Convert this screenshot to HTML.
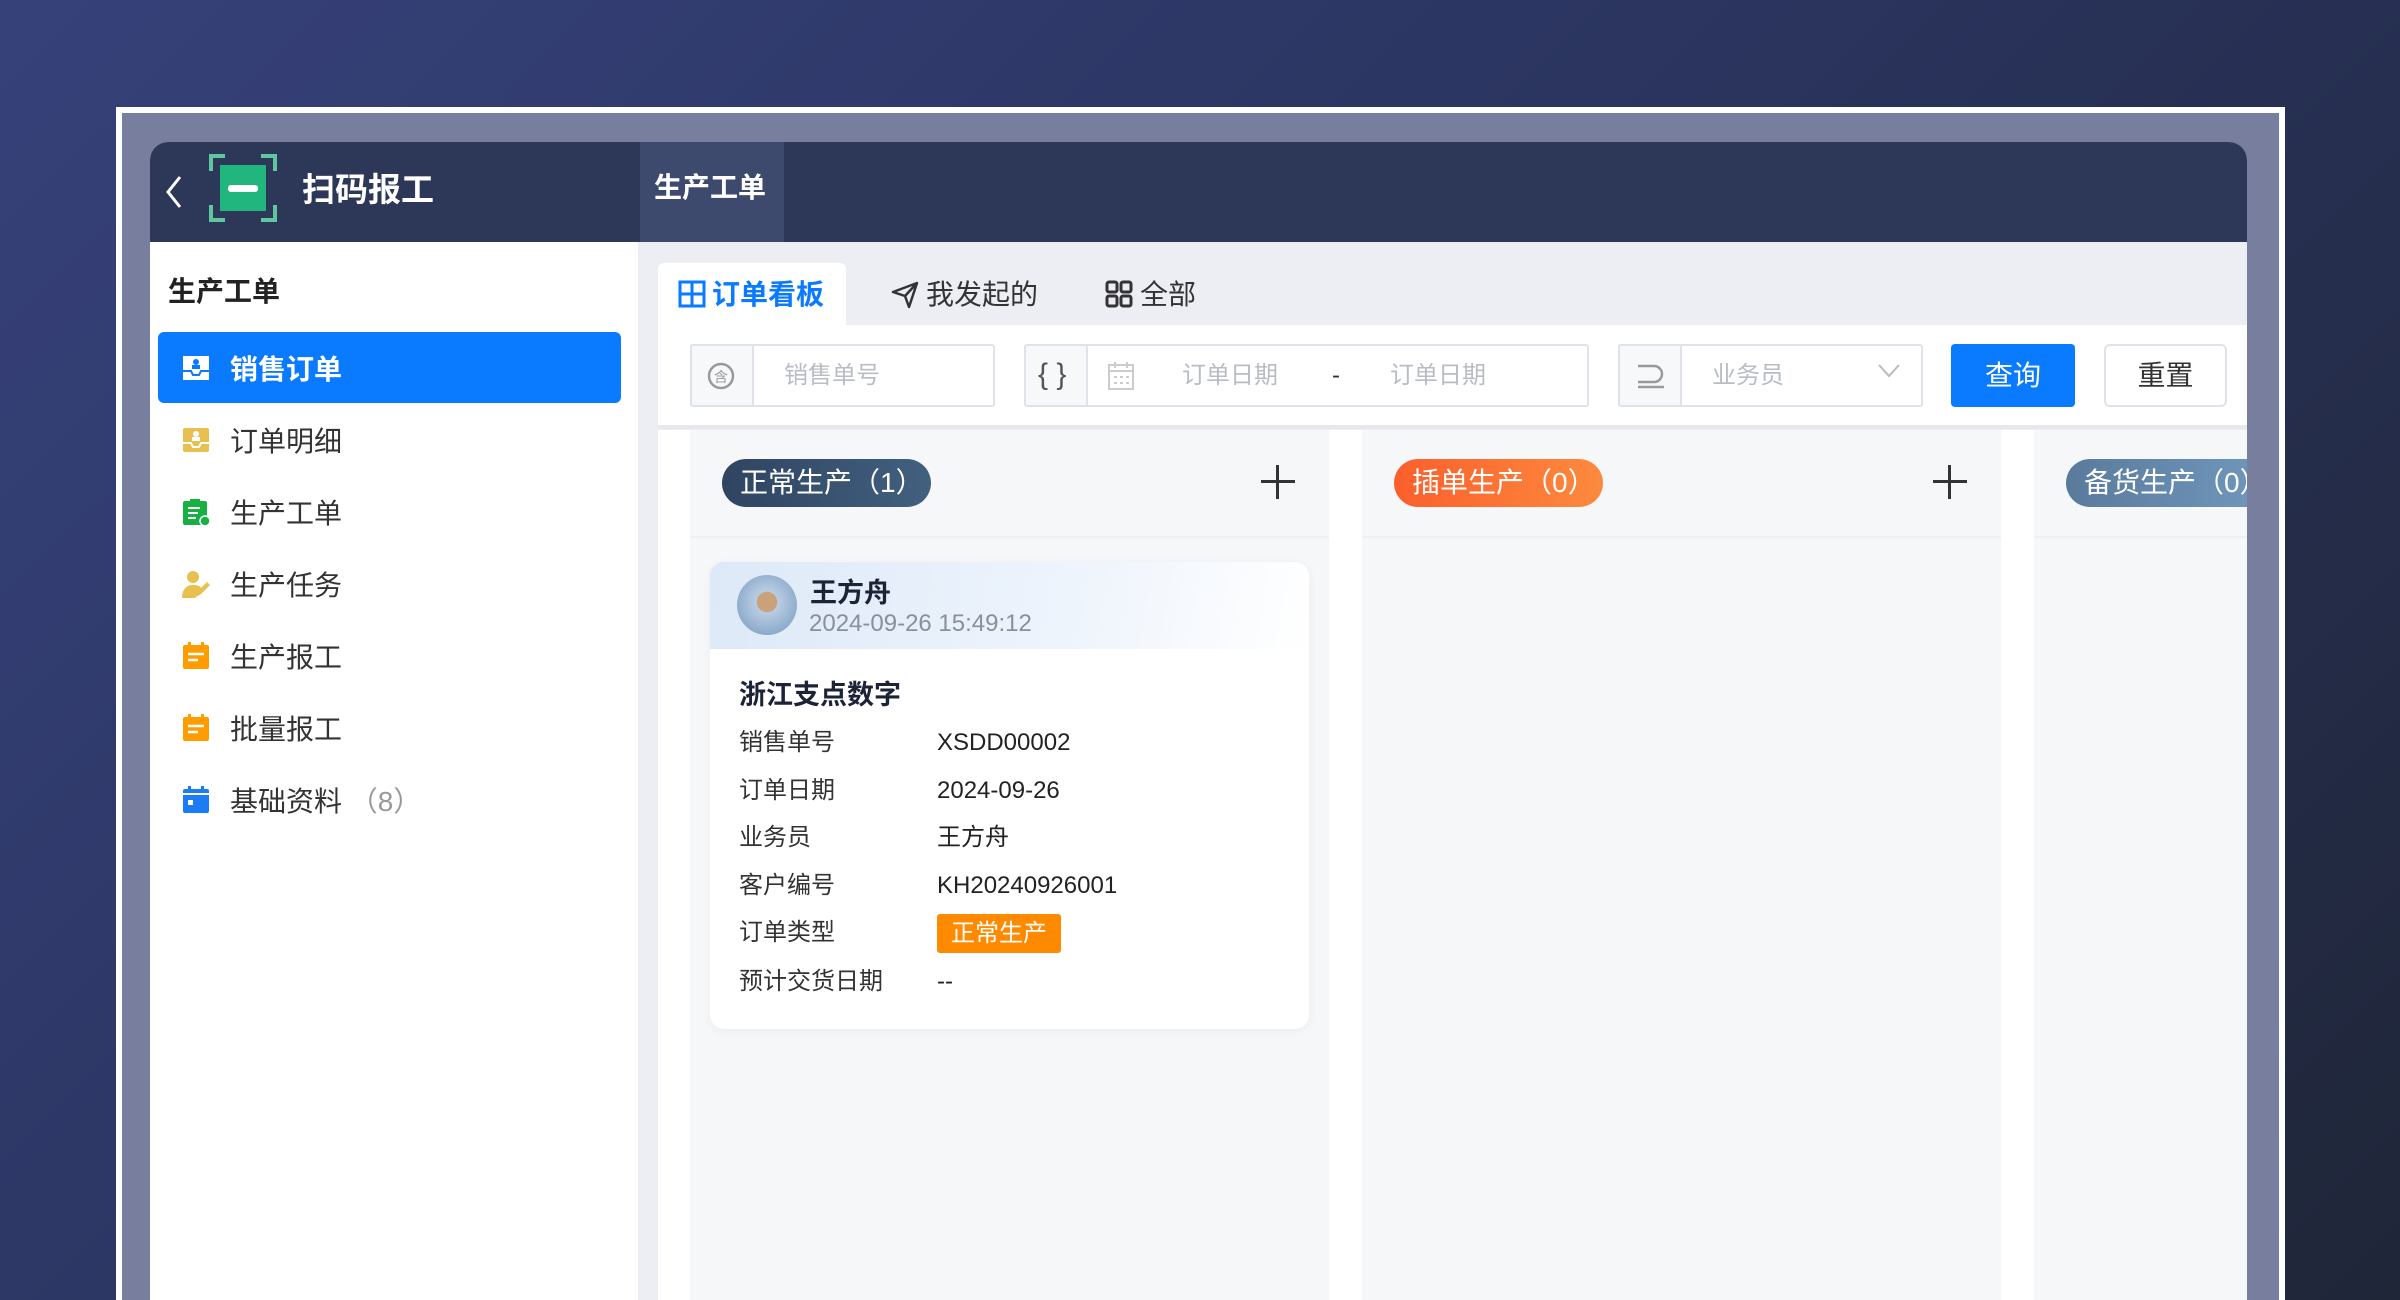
<!DOCTYPE html>
<html style="overflow:hidden;width:2400px;height:1300px"><head><meta charset="utf-8"><style>
*{margin:0;padding:0;box-sizing:border-box}
body{width:2400px;height:1300px;overflow:hidden;position:relative;font-family:"Liberation Sans","Noto Sans CJK SC",sans-serif;background:linear-gradient(135deg,#36417a 0%,#2b3560 45%,#1f2638 100%);}
.abs{position:absolute}
.frame{left:116px;top:107px;width:2169px;height:1193px;border:6px solid #fff;border-bottom:none;background:#777e9e}
.app{left:150px;top:142px;width:2097px;height:1158px;background:#eceef3;border-radius:18px 18px 0 0;overflow:hidden}
.hdr{left:0;top:0;width:2097px;height:100px;background:#2d3858}
.side{left:0;top:100px;width:488px;height:1100px;background:#fff}
.si{position:absolute;left:0;width:488px;height:72px;font-size:28px;line-height:72px;color:#333}
.si .ic{position:absolute;left:32px;top:22px;width:28px;height:28px}
.si .t{position:absolute;left:80px;top:2px}
.inp{position:absolute;top:202px;height:63px;border:2px solid #dfe2e8;background:#fff;border-radius:3px}
.inp .pre{position:absolute;left:0;top:0;bottom:0;background:#f7f8fa;border-right:2px solid #dfe2e8}
.ph{position:absolute;top:0;line-height:60px;font-size:24px;color:#b8bcc4}
.col{position:absolute;top:288px;height:900px;background:#f6f7f9}
.pill{position:absolute;top:29px;height:48px;border-radius:24px;color:#fff;font-size:28px;line-height:48px;padding-left:18px}
.plus{position:absolute;top:35px;width:34px;height:34px}
.plus:before{content:"";position:absolute;left:0;top:15px;width:34px;height:3px;background:#333}
.plus:after{content:"";position:absolute;left:15px;top:0;width:3px;height:34px;background:#333}
.row{position:absolute;left:29px;font-size:24px;line-height:30px;color:#333}
.val{position:absolute;left:227px;font-size:24px;line-height:30px;color:#222}
</style></head><body>
<div class="abs frame"></div>
<div class="abs app">
 <div class="abs hdr">
  <svg class="abs" style="left:12px;top:30px" width="24" height="40"><path d="M18 5 L6 20 L18 35" stroke="#fff" stroke-width="3" fill="none"/></svg>
  <svg class="abs" style="left:58px;top:11px" width="70" height="70"><path d="M3 18V3h14M53 3h14v15M3 52v15h14M53 67h14V52" stroke="#5fc7a0" stroke-width="4" fill="none"/><rect x="12" y="12" width="46" height="46" fill="#20b67e"/><rect x="20" y="32" width="30" height="7" rx="3" fill="#fff"/></svg>
  <div class="abs" style="left:152px;top:0;line-height:96px;font-size:33px;font-weight:bold;color:#fff">扫码报工</div>
  <div class="abs" style="left:490px;top:0;width:144px;height:100px;background:#3d4a6e"></div>
  <div class="abs" style="left:504px;top:0;line-height:92px;font-size:28px;font-weight:bold;color:#fff">生产工单</div>
 </div>
 <div class="abs side">
  <div class="abs" style="left:18px;top:28px;font-size:28px;font-weight:bold;color:#222">生产工单</div>
  <div class="abs" style="left:8px;top:90px;width:463px;height:71px;background:#0a7bff;border-radius:6px"></div>
  <div class="si" style="top:90px;color:#fff;font-weight:bold"><svg class="ic" viewBox="0 0 28 28"><rect x="1" y="2" width="26" height="24" fill="#fff"/><path d="M1 17h8l2 4h6l2-4h8" stroke="#0a7bff" stroke-width="2" fill="none"/><circle cx="14" cy="8" r="3" fill="#0a7bff"/><rect x="10" y="11" width="8" height="4" fill="#0a7bff"/></svg><span class="t">销售订单</span></div>
  <div class="si" style="top:162px"><svg class="ic" viewBox="0 0 28 28"><rect x="1" y="2" width="26" height="24" rx="2" fill="#e8c04f"/><path d="M1 17h8l2 4h6l2-4h8" stroke="#fff" stroke-width="2" fill="none"/><circle cx="14" cy="8" r="3" fill="#fff"/><rect x="10" y="11" width="8" height="4" fill="#fff"/></svg><span class="t">订单明细</span></div>
  <div class="si" style="top:234px"><svg class="ic" viewBox="0 0 28 28"><rect x="1" y="3" width="24" height="24" rx="2" fill="#19b043"/><rect x="8" y="1" width="10" height="4" fill="#19b043"/><path d="M6 10h12M6 15h10M6 20h8" stroke="#fff" stroke-width="2"/><circle cx="23" cy="23" r="5" fill="#19b043" stroke="#fff" stroke-width="1.5"/></svg><span class="t">生产工单</span></div>
  <div class="si" style="top:306px"><svg class="ic" viewBox="0 0 28 28"><circle cx="11" cy="7" r="6" fill="#e8c04f"/><path d="M0 28c0-9 5-13 11-13s8 2 9 4l-7 9z" fill="#e8c04f"/><path d="M14 27l2-6 9-9 3 3-9 9z" fill="#e8c04f"/></svg><span class="t">生产任务</span></div>
  <div class="si" style="top:378px"><svg class="ic" viewBox="0 0 28 28"><rect x="1" y="3" width="26" height="24" rx="2" fill="#ff9d00"/><rect x="6" y="0" width="3" height="5" fill="#ff9d00"/><rect x="19" y="0" width="3" height="5" fill="#ff9d00"/><path d="M6 12h16M6 18h10" stroke="#fff" stroke-width="2.5"/></svg><span class="t">生产报工</span></div>
  <div class="si" style="top:450px"><svg class="ic" viewBox="0 0 28 28"><rect x="1" y="3" width="26" height="24" rx="2" fill="#ff9d00"/><rect x="6" y="0" width="3" height="5" fill="#ff9d00"/><rect x="19" y="0" width="3" height="5" fill="#ff9d00"/><path d="M6 12h16M6 18h10" stroke="#fff" stroke-width="2.5"/></svg><span class="t">批量报工</span></div>
  <div class="si" style="top:522px"><svg class="ic" viewBox="0 0 28 28"><rect x="1" y="3" width="26" height="24" rx="2" fill="#1b7cf5"/><rect x="6" y="0" width="3" height="5" fill="#1b7cf5"/><rect x="19" y="0" width="3" height="5" fill="#1b7cf5"/><rect x="1" y="7" width="26" height="2" fill="#fff"/><rect x="6" y="14" width="5" height="5" fill="#fff"/></svg><span class="t">基础资料 <span style="color:#999">（8）</span></span></div>
 </div>
 <div class="abs" style="left:508px;top:121px;width:188px;height:62px;background:#fff;border-radius:6px 6px 0 0"></div>
 <svg class="abs" style="left:528px;top:138px" width="28" height="28"><rect x="2" y="2" width="24" height="24" fill="none" stroke="#0a7bff" stroke-width="3"/><path d="M14 2v24M2 14h24" stroke="#0a7bff" stroke-width="3"/></svg>
 <div class="abs" style="left:562px;top:131px;font-size:28px;font-weight:bold;color:#0a7bff">订单看板</div>
 <svg class="abs" style="left:740px;top:138px" width="30" height="30"><path d="M3 12L27 3 19 27 15 16zM15 16l12-13" fill="none" stroke="#333" stroke-width="2.5" stroke-linejoin="round"/></svg>
 <div class="abs" style="left:776px;top:131px;font-size:28px;color:#333">我发起的</div>
 <svg class="abs" style="left:955px;top:138px" width="28" height="28" fill="none" stroke="#333" stroke-width="3"><rect x="2" y="2" width="10" height="10" rx="2"/><rect x="16" y="2" width="10" height="10" rx="2"/><rect x="2" y="16" width="10" height="10" rx="2"/><rect x="16" y="16" width="10" height="10" rx="2"/></svg>
 <div class="abs" style="left:990px;top:131px;font-size:28px;color:#333">全部</div>
 <div class="abs" style="left:508px;top:183px;width:1589px;height:104px;background:#fff;border-bottom:4px solid #e6e8ed"></div>
 <div class="inp" style="left:540px;width:305px"><div class="pre" style="width:62px"><svg style="position:absolute;left:14px;top:15px" width="30" height="30"><circle cx="15" cy="15" r="12" fill="none" stroke="#999" stroke-width="2.5"/><text x="15" y="21" font-size="14" text-anchor="middle" fill="#999" font-family="Noto Sans CJK SC">含</text></svg></div><div class="ph" style="left:92px">销售单号</div></div>
 <div class="inp" style="left:874px;width:565px"><div class="pre" style="width:62px"><div style="position:absolute;left:12px;top:0;line-height:58px;font-size:30px;color:#555">{ }</div></div>
  <svg style="position:absolute;left:82px;top:16px" width="26" height="28"><rect x="1" y="3" width="24" height="24" fill="none" stroke="#ccc" stroke-width="2"/><path d="M1 9h24M7 0v6M19 0v6M6 15h3M12 15h3M18 15h3M6 21h3M12 21h3M18 21h3" stroke="#ccc" stroke-width="2"/></svg>
  <div class="ph" style="left:156px">订单日期</div><div class="ph" style="left:306px;color:#333">-</div><div class="ph" style="left:364px">订单日期</div></div>
 <div class="inp" style="left:1468px;width:305px"><div class="pre" style="width:62px"><svg style="position:absolute;left:16px;top:17px" width="30" height="26" fill="none" stroke="#999" stroke-width="2.5"><path d="M2 3h16a8 8 0 0 1 0 16H2M2 24h26"/></svg></div><div class="ph" style="left:92px">业务员</div><svg style="position:absolute;left:258px;top:18px" width="22" height="14"><path d="M1 1l10 11L21 1" fill="none" stroke="#bbb" stroke-width="2"/></svg></div>
 <div class="abs" style="left:1801px;top:202px;width:124px;height:63px;background:#0a7bff;border-radius:4px;color:#fff;font-size:28px;text-align:center;line-height:63px">查询</div>
 <div class="abs" style="left:1954px;top:202px;width:123px;height:63px;background:#fff;border:2px solid #dfe2e8;border-radius:6px;color:#333;font-size:28px;text-align:center;line-height:59px">重置</div>
 <div class="col" style="left:540px;width:639px">
  <div class="abs" style="left:0;top:0;width:639px;height:108px;border-bottom:2px solid #eef0f3"></div>
  <div class="pill" style="left:32px;width:209px;background:linear-gradient(90deg,#2f4461,#42607f)">正常生产（1）</div>
  <div class="plus" style="left:571px"></div>
  <div class="abs" style="left:20px;top:132px;width:599px;height:467px;background:#fff;border-radius:14px;overflow:hidden;box-shadow:0 2px 10px rgba(0,0,0,.05)">
   <div class="abs" style="left:0;top:0;width:599px;height:87px;background:linear-gradient(100deg,#dde9f8,#eef4fc 60%,#fff)"></div>
   <div class="abs" style="left:27px;top:13px;width:60px;height:60px;border-radius:50%;background:radial-gradient(circle at 50% 45%,#c9a27c 0 22%,#b9cde3 24%,#8eaccc 70%,#6e8094 100%)"></div>
   <div class="abs" style="left:100px;top:9px;font-size:27px;font-weight:bold;color:#1c2337">王方舟</div>
   <div class="abs" style="left:99px;top:48px;font-size:24px;color:#8a8f99">2024-09-26 15:49:12</div>
   <div class="abs" style="left:29px;top:111px;font-size:27px;font-weight:bold;color:#1c2337">浙江支点数字</div>
   <div class="row" style="top:166px">销售单号</div><div class="val" style="top:166px">XSDD00002</div>
   <div class="row" style="top:214px">订单日期</div><div class="val" style="top:214px">2024-09-26</div>
   <div class="row" style="top:261px">业务员</div><div class="val" style="top:261px">王方舟</div>
   <div class="row" style="top:309px">客户编号</div><div class="val" style="top:309px">KH20240926001</div>
   <div class="row" style="top:356px">订单类型</div><div class="abs" style="left:227px;top:352px;width:124px;height:39px;background:#ff8a00;border-radius:3px;color:#fff;font-size:24px;line-height:39px;text-align:center">正常生产</div>
   <div class="row" style="top:405px">预计交货日期</div><div class="val" style="top:405px">--</div>
  </div>
 </div>
 <div class="col" style="left:1212px;width:639px">
  <div class="abs" style="left:0;top:0;width:639px;height:108px;border-bottom:2px solid #eef0f3"></div>
  <div class="pill" style="left:32px;width:209px;background:linear-gradient(90deg,#fb5f2c,#fc8a3e)">插单生产（0）</div>
  <div class="plus" style="left:571px"></div>
 </div>
 <div class="col" style="left:1884px;width:300px">
  <div class="abs" style="left:0;top:0;width:300px;height:108px;border-bottom:2px solid #eef0f3"></div>
  <div class="pill" style="left:32px;width:209px;background:linear-gradient(90deg,#5a7a9c,#7199bd)">备货生产（0）</div>
 </div>
 <div class="abs" style="left:1179px;top:288px;width:33px;height:900px;background:#fff"></div>
 <div class="abs" style="left:1851px;top:288px;width:33px;height:900px;background:#fff"></div>
 <div class="abs" style="left:508px;top:288px;width:32px;height:900px;background:#fff"></div>
</div>
</body></html>
